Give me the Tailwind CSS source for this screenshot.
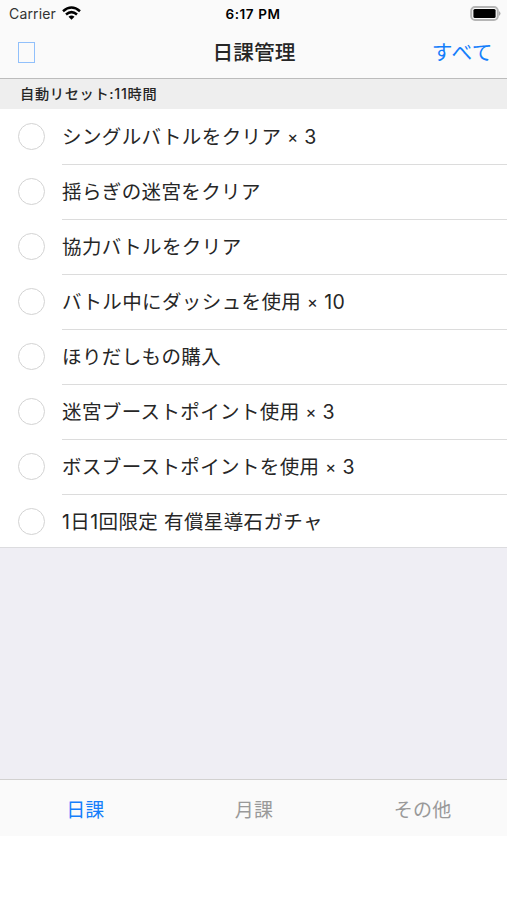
<!DOCTYPE html>
<html lang="ja">
<head>
<meta charset="utf-8">
<title>日課管理</title>
<script src="https://cdn.jsdelivr.net/npm/@tailwindcss/browser@4"></script>
</head>
<body class="w-[507px] h-[900px] overflow-hidden bg-white font-[Inter,'Noto_Sans_CJK_JP',sans-serif] text-[#262626]">
<div class="flex flex-col h-[836px] bg-[#efeef4]">
  <header class="bg-[#fafafa] h-[79px] border-b border-[#bcbcbc] shrink-0">
    <div class="grid grid-cols-3 items-center h-[27px] px-[9px] text-[14px] leading-[20px]">
      <div class="flex items-center gap-[6px]">
        <span class="text-[#333] tracking-[0.15px]">Carrier</span>
        <svg class="w-[19px] h-[14px] -mt-[2px]" viewBox="0 0 19 14" fill="none" stroke="#000" stroke-width="2.5"><path d="M1 5.2Q9.5-2.2 18 5.2M4 8.5Q9.5 3.7 15 8.5"/><path d="M6.5 10.7Q9.5 8.1 12.5 10.7L9.5 13.7Z" fill="#000" stroke="none"/></svg>
      </div>
      <span class="text-center font-semibold text-[13.5px] text-black tracking-[0.6px] pr-px">6:17 PM</span>
      <svg class="w-[31px] h-[15px] justify-self-end -mr-[3px]" viewBox="0 0 31 15"><rect x="1.2" y="1" width="26.6" height="13" rx="3.8" fill="#fafafa" stroke="#b5b5b5" stroke-width="2"/><rect x="3.4" y="3" width="22.2" height="9" rx="1.5"/><path d="M29 5Q32 7.5 29 10Z" fill="#aaa"/></svg>
    </div>
    <div class="grid grid-cols-3 items-center h-[51px] pl-[18px] pr-[15px]">
      <div class="w-[17px] h-[21px] border border-[#91c0fb]"></div>
      <h1 class="text-center font-medium text-[20.7px] leading-[30px] whitespace-nowrap pt-px pr-[2px]">日課管理</h1>
      <span class="text-right text-[#147efb] text-[20.7px] tracking-[0.5px] leading-[30px] -mr-px">すべて</span>
    </div>
  </header>
  <h2 class="bg-[#eeeeee] h-[30px] shrink-0 pl-[20px] pb-px flex items-center font-medium text-[14.2px] tracking-[0.7px] leading-[21px]">自動リセット:11時間</h2>
  <ul id="tasks" class="bg-white h-[439px] pt-px border-b border-[#dcdcdf] shrink-0 grid grid-rows-[repeat(7,55px)_1fr] text-[19.5px] tracking-[0.38px] leading-[28px]">
    <li class="flex items-stretch pl-[18px] gap-[17px]"><span class="w-[27px] h-[27px] rounded-full border-[1.5px] border-[#d3d3d3] self-center shrink-0 mb-[2px]"></span><span class="flex-1 flex items-center border-b border-[#dcdcdc] whitespace-pre">シングルバトルをクリア <span class="text-[16.5px]">×</span> 3</span></li>
    <li class="flex items-stretch pl-[18px] gap-[17px]"><span class="w-[27px] h-[27px] rounded-full border-[1.5px] border-[#d3d3d3] self-center shrink-0 mb-[2px]"></span><span class="flex-1 flex items-center border-b border-[#dcdcdc] whitespace-pre">揺らぎの迷宮をクリア</span></li>
    <li class="flex items-stretch pl-[18px] gap-[17px]"><span class="w-[27px] h-[27px] rounded-full border-[1.5px] border-[#d3d3d3] self-center shrink-0 mb-[2px]"></span><span class="flex-1 flex items-center border-b border-[#dcdcdc] whitespace-pre">協力バトルをクリア</span></li>
    <li class="flex items-stretch pl-[18px] gap-[17px]"><span class="w-[27px] h-[27px] rounded-full border-[1.5px] border-[#d3d3d3] self-center shrink-0 mb-[2px]"></span><span class="flex-1 flex items-center border-b border-[#dcdcdc] whitespace-pre">バトル中にダッシュを使用 <span class="text-[16.5px]">×</span> 10</span></li>
    <li class="flex items-stretch pl-[18px] gap-[17px]"><span class="w-[27px] h-[27px] rounded-full border-[1.5px] border-[#d3d3d3] self-center shrink-0 mb-[2px]"></span><span class="flex-1 flex items-center border-b border-[#dcdcdc] whitespace-pre">ほりだしもの購入</span></li>
    <li class="flex items-stretch pl-[18px] gap-[17px]"><span class="w-[27px] h-[27px] rounded-full border-[1.5px] border-[#d3d3d3] self-center shrink-0 mb-[2px]"></span><span class="flex-1 flex items-center border-b border-[#dcdcdc] whitespace-pre">迷宮ブーストポイント使用 <span class="text-[16.5px]">×</span> 3</span></li>
    <li class="flex items-stretch pl-[18px] gap-[17px]"><span class="w-[27px] h-[27px] rounded-full border-[1.5px] border-[#d3d3d3] self-center shrink-0 mb-[2px]"></span><span class="flex-1 flex items-center border-b border-[#dcdcdc] whitespace-pre">ボスブーストポイントを使用 <span class="text-[16.5px]">×</span> 3</span></li>
    <li class="flex items-stretch pl-[18px] gap-[17px]"><span class="w-[27px] h-[27px] rounded-full border-[1.5px] border-[#d3d3d3] self-center shrink-0"></span><span class="flex-1 flex items-center pt-[2px] whitespace-pre">1日1回限定 有償星導石ガチャ</span></li>
  </ul>
  <nav class="mt-auto h-[57px] pt-[6px] pl-px shrink-0 bg-[#fafafa] border-t border-[#d2d1d0] grid grid-cols-3 items-center text-center text-[19px] tracking-[0.2px] leading-[28px] text-[#999]">
    <span class="text-[#147efb]">日課</span><span>月課</span><span>その他</span>
  </nav>
</div>
</body>
</html>
